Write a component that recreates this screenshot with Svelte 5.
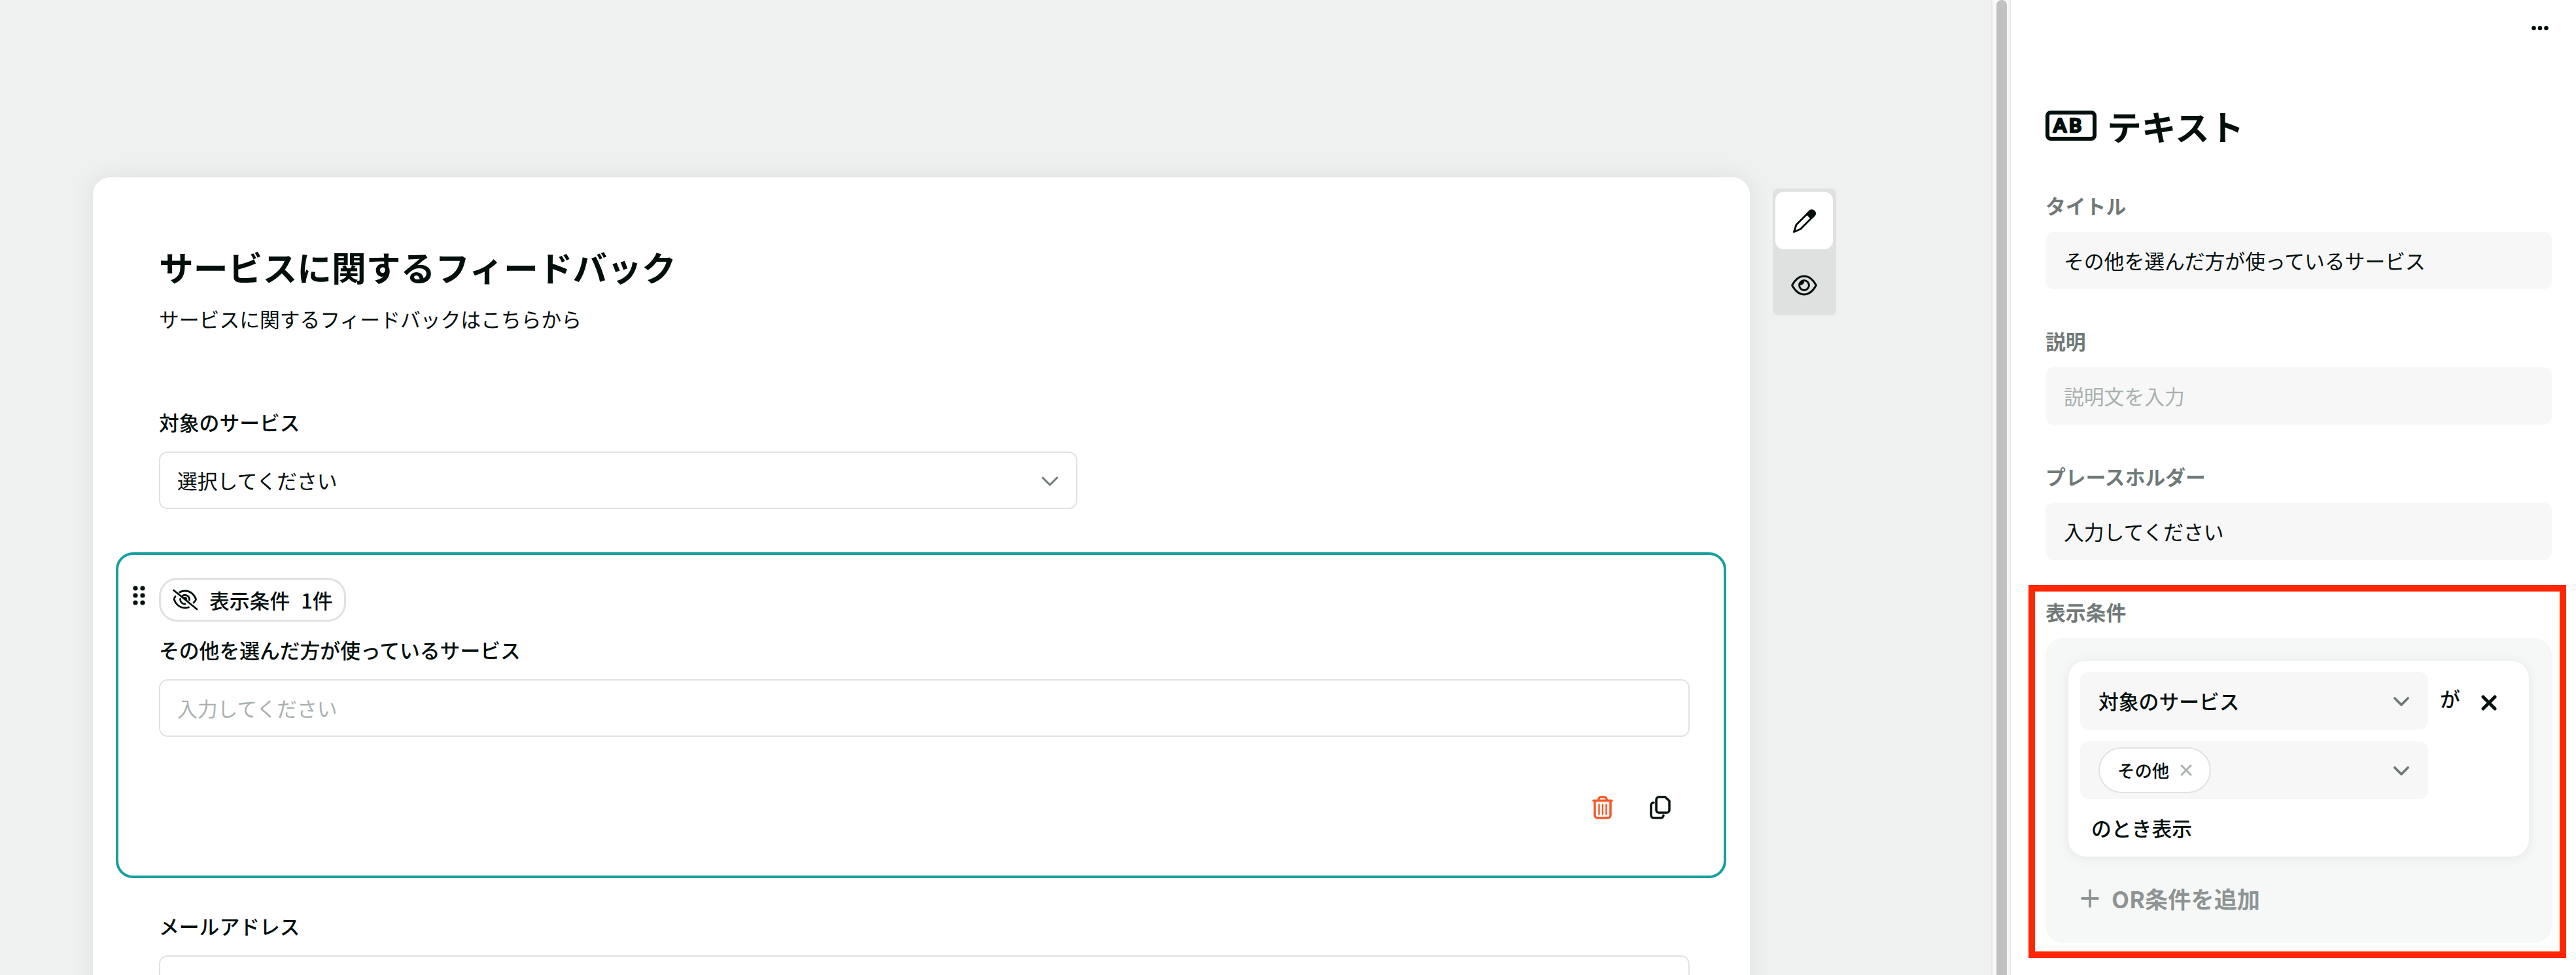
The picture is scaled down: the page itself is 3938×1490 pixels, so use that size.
<script lang="ts">
  const title = 'その他を選んだ方が使っているサービス';

  const settings = [
    { label: 'タイトル', value: title, placeholder: '' },
    { label: '説明', value: '', placeholder: '説明文を入力' },
    { label: 'プレースホルダー', value: '入力してください', placeholder: '' }
  ];
</script>

{#snippet chevron(size: 'small' | 'large')}
  <svg class="chevron {size}" viewBox="0 0 26 16" aria-hidden="true">
    <path d="M2 2l11 11L24 2" />
  </svg>
{/snippet}

<div class="app">
  <main class="canvas">
    <section class="form-card">
      <header class="form-header">
        <h1>サービスに関するフィードバック</h1>
        <p>サービスに関するフィードバックはこちらから</p>
      </header>

      <div class="field">
        <div class="field-label">対象のサービス</div>
        <div class="control select">
          <span>選択してください</span>
          {@render chevron('large')}
        </div>
      </div>

      <div class="field selected">
        <svg class="drag-handle" viewBox="0 0 20 30" aria-hidden="true">
          {#each [4, 15, 26] as cy}
            <circle cx="4" {cy} r="3.6" />
            <circle cx="15" {cy} r="3.6" />
          {/each}
        </svg>
        <div class="selected-body">
          <div class="condition-badge">
            <svg class="eye-off" viewBox="0 0 39 31" aria-hidden="true">
              <path d="M4 10.5C2.5 12.5 2 14.5 2.500 16c2 6 8 12 16.500 12 2 0 4-.3 5.500-1" />
              <path d="M10.500 4c2.500-1.300 5.500-2 8.500-2 8 0 14 5.500 16.500 12.500.3 1-1.500 3.500-3.500 5.500" />
              <path d="M15 9.500C20 6.500 26 10 25.500 16" />
              <path d="M11.500 14.500c0 4.500 3 7.500 7.500 7.500" />
              <path d="M16.500 13.500c1-1.800 4-1.300 4.500 1" />
              <path d="M1.500 1L37 30" />
            </svg>
            <span>表示条件</span>
            <span class="count">1件</span>
          </div>
          <div class="field-label">{title}</div>
          <div class="control placeholder">入力してください</div>
          <div class="actions">
            <svg class="trash" viewBox="0 0 32 36" aria-hidden="true">
              <path d="M2 7.500h28M4 8v22a4 4 0 0 0 4 4h16a4 4 0 0 0 4-4V8M9.500 7c0-3 2-5 4.500-5h4c2.500 0 4.500 2 4.500 5" />
              <path class="thin" d="M10.500 13.500v15M16 13.500v15M21.500 13.500v15" />
            </svg>
            <svg class="copy" viewBox="0 0 32 36" aria-hidden="true">
              <path d="M14 2h9.500L30 8v14a4 4 0 0 1-4 4H14a4 4 0 0 1-4-4V6a4 4 0 0 1 4-4z" />
              <path d="M6 10.500a4 4 0 0 0-4 4V30a4 4 0 0 0 4 4h11a4 4 0 0 0 4-4" />
            </svg>
          </div>
        </div>
      </div>

      <div class="field">
        <div class="field-label">メールアドレス</div>
        <div class="control"></div>
      </div>
    </section>

    <div class="mode-toggle">
      <button class="mode active" aria-label="編集">
        <svg viewBox="0 0 40 40" aria-hidden="true">
          <path d="M4.500 37.500L8 26.500 28.500 6a4.500 4.500 0 0 1 6.500 6.500L14.500 33z" />
          <path class="solid" d="M24.500 10L28.500 6a4.500 4.500 0 0 1 6.500 6.500L31 16.500z" />
        </svg>
      </button>
      <button class="mode" aria-label="プレビュー">
        <svg viewBox="0 0 40 40" aria-hidden="true">
          <path d="M1.600 20C6 12 12 6 20 6s14 6 18.400 14C34 28 28 34 20 34S6 28 1.600 20z" />
          <circle cx="20" cy="20" r="7.400" />
          <path class="highlight-dot" d="M13 20a7 7 0 0 1 7-7c.5 4-2 7-7 7z" />
        </svg>
      </button>
    </div>
  </main>

  <div class="scrollbar"><div class="thumb"></div></div>

  <aside class="panel">
    <div class="panel-menu">
      <svg viewBox="0 0 26 8" aria-hidden="true">
        <circle cx="3.500" cy="4" r="3.300" />
        <circle cx="13" cy="4" r="3.300" />
        <circle cx="22.500" cy="4" r="3.300" />
      </svg>
    </div>

    <h2>
      <svg class="text-icon" viewBox="0 0 78 48" aria-hidden="true">
        <rect x="3" y="4" width="72" height="40" rx="5" />
        <text x="12" y="34" textLength="43">AB</text>
      </svg>
      テキスト
    </h2>

    {#each settings as item}
      <div class="setting">
        <div class="setting-label">{item.label}</div>
        <div class="setting-input" class:placeholder={!item.value}>
          {item.value || item.placeholder}
        </div>
      </div>
    {/each}

    <div class="setting">
      <div class="setting-label">表示条件</div>
      <div class="conditions">
        <div class="condition-card">
          <div class="row">
            <div class="condition-select">
              <span>対象のサービス</span>
              {@render chevron('small')}
            </div>
            <span class="particle">が</span>
            <svg class="remove" viewBox="0 0 24 24" aria-hidden="true">
              <path d="M3 3l18 18M21 3L3 21" />
            </svg>
          </div>
          <div class="row">
            <div class="condition-select">
              <span class="tag">
                その他
                <svg viewBox="0 0 18 18" aria-hidden="true">
                  <path d="M2 2l14 14M16 2L2 16" />
                </svg>
              </span>
              {@render chevron('small')}
            </div>
          </div>
          <div class="suffix">のとき表示</div>
        </div>
        <div class="add-condition">
          <svg viewBox="0 0 28 28" aria-hidden="true">
            <path d="M14 2v24M2 14h24" />
          </svg>
          OR条件を追加
        </div>
      </div>
      <div class="highlight"></div>
    </div>
  </aside>
</div>

<style>
  :global(body) {
    margin: 0;
    overflow: hidden;
  }

  .app {
    display: flex;
    width: 3938px;
    height: 1490px;
    overflow: hidden;
    background: #fff;
    color: #030f0d;
    font-family: 'Noto Sans CJK JP', 'Noto Sans', sans-serif;
    font-size: 30.8px;
    line-height: 44px;
  }

  .app * {
    box-sizing: border-box;
  }

  h1,
  h2,
  p {
    margin: 0;
  }

  svg {
    display: block;
    flex: none;
    fill: none;
    stroke: currentColor;
    stroke-linecap: round;
    stroke-linejoin: round;
    overflow: visible;
  }

  .canvas {
    display: flex;
    align-items: flex-start;
    flex: none;
    gap: 35px;
    width: 3044px;
    padding: 271px 0 0 142px;
    background: #eff1f1;
  }

  .form-card {
    width: 2533px;
    height: 1300px;
    flex: none;
    padding: 97px 92px 0 101px;
    border-radius: 26.4px;
    background: #fff;
    box-shadow: 0 0 35px rgb(0 0 0 / 8%);
  }

  .form-header {
    margin-bottom: 114px;
  }

  h1 {
    font-size: 52.8px;
    line-height: 78px;
    font-weight: 700;
  }

  .form-header p {
    margin-top: 19px;
  }

  .field-label {
    margin-bottom: 23px;
    font-weight: 500;
  }

  .control {
    display: flex;
    align-items: center;
    height: 88px;
    padding: 0 26px;
    border: 2px solid #e0e1e1;
    border-radius: 13.2px;
  }

  .select {
    width: 1404px;
    justify-content: space-between;
  }

  .placeholder {
    color: #a9b1af;
  }

  .chevron {
    stroke: #6f7a78;
    stroke-width: 3;
  }

  .chevron.large {
    width: 26px;
    height: 16px;
    margin: 3px 1px 0 0;
  }

  .chevron.small {
    width: 24px;
    height: 15px;
    margin-top: 2px;
    stroke-width: 4;
  }

  .selected {
    display: flex;
    width: 2462px;
    height: 498px;
    margin: 66px 0 51px -66px;
    padding: 35px 52px 0 22px;
    border: 4px solid #169f9f;
    border-radius: 26.4px;
  }

  .drag-handle {
    width: 20px;
    height: 30px;
    margin: 12px 20px 0 0;
    fill: currentColor;
    stroke: none;
  }

  .selected-body {
    flex: 1;
  }

  .condition-badge {
    display: flex;
    align-items: center;
    width: 286px;
    height: 67px;
    margin-bottom: 21px;
    padding-left: 18px;
    border: 3px solid #e0e1e1;
    border-radius: 28px;
    font-weight: 500;
  }

  .eye-off {
    width: 39px;
    height: 31px;
    margin-right: 17px;
    stroke-width: 2.8;
  }

  .count {
    margin-left: 17px;
  }

  .actions {
    display: flex;
    justify-content: flex-end;
    gap: 56px;
    padding: 90px 29px 0 0;
  }

  .actions svg {
    width: 32px;
    height: 36px;
    stroke-width: 3.5;
  }

  .trash {
    color: #fa5523;
  }

  .trash .thin {
    stroke-width: 2.4;
  }

  .mode-toggle {
    display: flex;
    flex-direction: column;
    gap: 11px;
    width: 97px;
    height: 194px;
    margin-top: 17px;
    padding: 5px 4px 2px;
    border-radius: 8.8px;
    background: #dfe1e0;
  }

  .mode {
    display: flex;
    align-items: center;
    justify-content: center;
    flex: none;
    width: 88px;
    height: 88px;
    padding: 0;
    border: 0;
    border-radius: 13.2px;
    background: none;
    color: inherit;
  }

  .mode.active {
    background: #fff;
  }

  .mode svg {
    width: 40px;
    height: 40px;
    stroke-width: 3;
  }

  .solid {
    fill: currentColor;
  }

  .highlight-dot {
    fill: currentColor;
    stroke: none;
  }

  .scrollbar {
    flex: none;
    width: 30px;
    padding: 0 4px 0 6px;
    border: solid #e8e8e8;
    border-width: 0 2px;
    background: #fafafa;
  }

  .thumb {
    width: 16px;
    height: 1510px;
    border-radius: 8px;
    background: #c1c1c1;
  }

  .panel {
    flex: 1;
    padding: 39px 37px 0 53px;
    background: #fff;
  }

  .panel-menu {
    display: flex;
    justify-content: flex-end;
    margin-right: 5px;
  }

  .panel-menu svg {
    width: 26px;
    height: 8px;
    fill: currentColor;
    stroke: none;
  }

  h2 {
    display: flex;
    align-items: center;
    gap: 16px;
    height: 78px;
    margin: 106px 0 61px;
    font-size: 52.8px;
    line-height: 78px;
    font-weight: 700;
  }

  .text-icon {
    width: 78px;
    height: 48px;
    stroke-width: 6;
  }

  .text-icon text {
    fill: currentColor;
    stroke-width: 2.5;
    font-family: Lato, sans-serif;
    font-size: 29px;
    font-weight: 700;
  }

  .setting {
    position: relative;
    margin-bottom: 57px;
  }

  .setting-label {
    height: 44px;
    margin-bottom: 18px;
    color: #6f7a78;
    font-weight: 700;
  }

  .setting-input {
    height: 88px;
    padding: 22px 28px;
    border-radius: 13.2px;
    background: #f7f7f7;
  }

  .conditions {
    height: 466px;
    padding: 35px;
    border-radius: 26.4px;
    background: #f6f8f8;
  }

  .condition-card {
    height: 299px;
    padding: 17px 18px;
    border-radius: 26.4px;
    background: #fff;
    box-shadow: 0 2px 18px rgb(0 0 0 / 8%);
    font-weight: 500;
  }

  .row {
    display: flex;
    align-items: center;
    margin-bottom: 18px;
  }

  .condition-select {
    display: flex;
    align-items: center;
    justify-content: space-between;
    width: 532px;
    height: 88px;
    padding: 0 29px 0 28px;
    border-radius: 13.2px;
    background: #f7f7f7;
  }

  .particle {
    margin: -8px 32px 0 18px;
  }

  .remove {
    width: 24px;
    height: 24px;
    margin-top: 5px;
    stroke-width: 5;
  }

  .tag {
    display: flex;
    align-items: center;
    justify-content: space-between;
    width: 172px;
    height: 70px;
    padding: 0 27px;
    border: 2px solid #e0e1e1;
    border-radius: 35px;
    background: #fff;
    font-size: 26.4px;
  }

  .tag svg {
    width: 18px;
    height: 18px;
    stroke: #a9b1af;
    stroke-width: 3;
  }

  .suffix {
    padding-left: 17px;
    margin-top: 22px;
  }

  .add-condition {
    display: flex;
    align-items: center;
    gap: 19px;
    margin-top: 42px;
    padding-left: 19px;
    color: #8d9493;
    font-size: 35.2px;
    font-weight: 700;
  }

  .add-condition svg {
    width: 28px;
    height: 28px;
    stroke-width: 4;
  }

  /* Annotation frame drawn over the condition settings */
  .highlight {
    position: absolute;
    top: -19px;
    right: -22px;
    left: -26px;
    height: 570px;
    border: 10px solid #ff2600;
  }
</style>
